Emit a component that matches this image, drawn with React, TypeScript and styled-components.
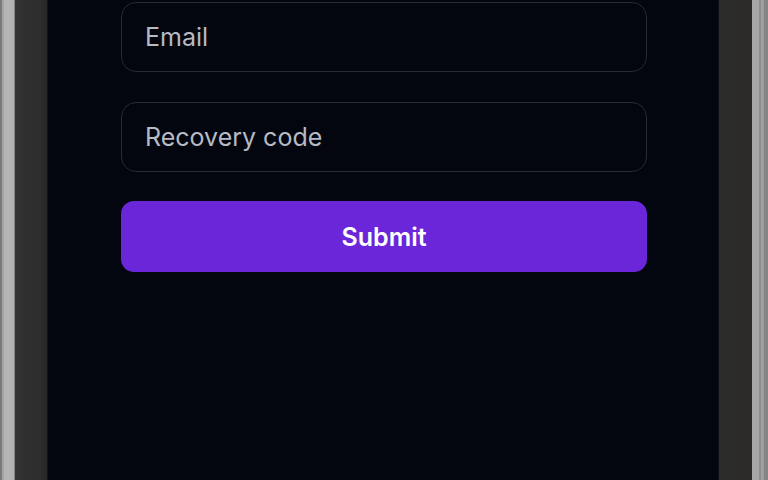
import React from "react";
import styled, { createGlobalStyle } from "styled-components";

const Global = createGlobalStyle`
  html, body { margin: 0; padding: 0; background: #2e2e2e; }
  body { font-family: Inter, "Noto Sans", sans-serif; }
  * { box-sizing: border-box; }
`;

const Device = styled.div`
  display: flex;
  width: 768px;
  height: 480px;
  overflow: hidden;
`;

const LeftBezel = styled.div`
  flex: 0 0 48px;
  background: linear-gradient(
    to right,
    #7a7a7a 0px, #7a7a7a 2px,
    #a4a4a4 2px, #a4a4a4 4px,
    #b6b6b6 4px, #b3b3b3 14px,
    #868686 14px, #868686 15px,
    #363636 15px, #303030 22px,
    #2e2e2e 40px, #262626 47px,
    #141416 47px, #141416 48px
  );
`;

const RightBezel = styled.div`
  flex: 0 0 50px;
  background: linear-gradient(
    to right,
    #0e1216 0px, #0e1216 1px,
    #2c2c2b 1px, #2b2a28 34px,
    #a8a8a8 34px, #a6a6a6 41px,
    #8e8e8e 41px, #8e8e8e 43px,
    #a2a2a2 43px, #9c9c9c 46px,
    #858585 46px, #858585 50px
  );
`;

const Screen = styled.main`
  flex: 1;
  background: #03060f;
  display: flex;
  flex-direction: column;
  align-items: center;
  padding: 2px 0 0 2px;
`;

const Form = styled.form`
  width: 526px;
  display: flex;
  flex-direction: column;
  gap: 30px;
`;

const Input = styled.input`
  height: 70px;
  width: 100%;
  border: 1px solid #262b36;
  border-radius: 15px;
  background: #03060f;
  padding: 0 23px;
  font-family: Inter, "Noto Sans", sans-serif;
  font-size: 25px;
  color: #e6e8ee;
  outline: none;
  &::placeholder { color: #b6bac4; }
`;

const Button = styled.button`
  height: 71px;
  width: 100%;
  margin-top: -1px;
  border: none;
  border-radius: 13px;
  background: #6b26d9;
  color: #ffffff;
  font-family: Inter, "Noto Sans", sans-serif;
  font-size: 25px;
  font-weight: 600;
  cursor: pointer;
`;

export default function App() {
  return (
    <>
      <Global />
      <Device>
        <LeftBezel />
        <Screen>
          <Form onSubmit={(e) => e.preventDefault()}>
            <Input type="email" placeholder="Email" />
            <Input type="text" placeholder="Recovery code" />
            <Button type="submit">Submit</Button>
          </Form>
        </Screen>
        <RightBezel />
      </Device>
    </>
  );
}
